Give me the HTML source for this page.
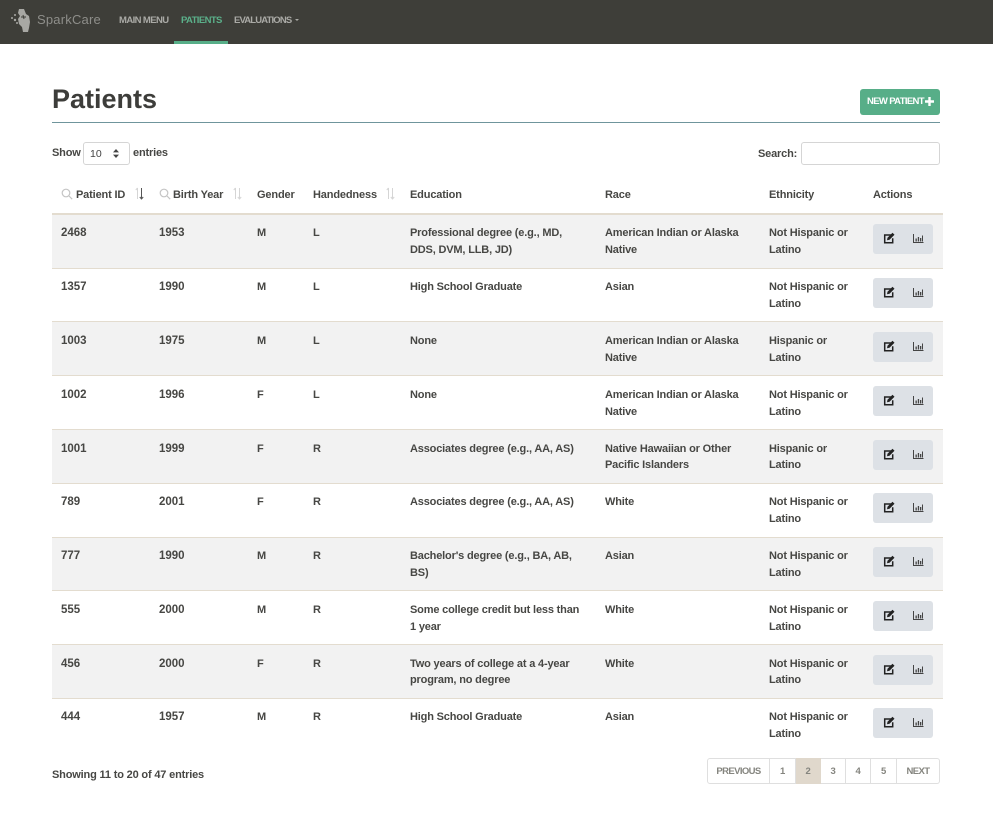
<!DOCTYPE html>
<html><head><meta charset="utf-8"><style>
html,body{margin:0;padding:0;background:#fff}
body{width:993px;height:825px;position:relative;overflow:hidden;font-family:"Liberation Sans",sans-serif;color:#3d3d3a;-webkit-font-smoothing:antialiased}
.a{position:absolute;white-space:nowrap}
.t{position:absolute;font-size:11px;letter-spacing:-.17px;font-weight:700;line-height:17px;white-space:nowrap;color:#474744;margin-top:1px}
.t[style$="top:440px"],.t[style$="top:655px"]{line-height:16px;margin-top:1px}
.t[style^="left:61px"],.t[style^="left:159px"]{font-size:11.5px;letter-spacing:0}
.h{position:absolute;font-size:11px;letter-spacing:-.15px;font-weight:700;line-height:17px;top:187px;white-space:nowrap;color:#474744}
.r{position:absolute;left:52px;width:891px;height:54px;box-sizing:border-box;border-bottom:1px solid #e3dccf}
.g{background:#f2f2f2}
.b{position:absolute;left:873px;width:60px;height:30px;background:#dde1e6;border-radius:3px}
.b svg{position:absolute;left:0;top:0}
.p{position:absolute;top:758px;height:26px;box-sizing:border-box;border:1px solid #dfdfdf;border-left:0;font-size:9.5px;letter-spacing:-.25px;font-weight:700;line-height:25px;text-align:center;color:#85857f;background:#fff}
.n{position:absolute;font-size:9.5px;line-height:13px;font-weight:700;letter-spacing:-.6px;top:14px;white-space:nowrap;color:#aaaaa6}
</style></head><body>
<div class="a" style="left:0;top:0;width:993px;height:44px;background:#3e3e39"></div>
<svg class="a" style="left:10px;top:7px" width="24" height="26" viewBox="0 0 24 26"><path d="M9 2l5 0 2 5 3 2 1 6-1 6-1 4-5 0-1-5-3-3-1-5 2-3-2-3z" fill="#a8a8a4"/><path d="M13 8l1 4M11 10h5" stroke="#3e3e39" stroke-width="1"/><circle cx="2" cy="11" r="1" fill="#a8a8a4"/><circle cx="5" cy="8" r="1" fill="#a8a8a4"/><circle cx="5" cy="13" r="1.200" fill="#a8a8a4"/><circle cx="7" cy="16" r="1" fill="#a8a8a4"/></svg>
<div class="a" style="left:37px;top:10px;font-size:13px;line-height:20px;color:#8e8e8a;letter-spacing:.2px">SparkCare</div>
<div class="n" style="left:119px">MAIN MENU</div>
<div class="n" style="left:181px;color:#5bb08a">PATIENTS</div>
<div class="n" style="left:234px;letter-spacing:-.85px">EVALUATIONS</div>
<div class="a" style="left:295px;top:19px;width:0;height:0;border:2.500px solid transparent;border-bottom:0;border-top:2.500px solid #aaaaa6"></div>
<div class="a" style="left:174px;top:41px;width:54px;height:3px;background:#57ae88"></div>

<div class="a" style="left:52px;top:81px;font-size:27px;line-height:36px;font-weight:700;color:#3d3d3a">Patients</div>
<div class="a" style="left:860px;top:89px;width:80px;height:26px;background:#57ae88;border-radius:3px"></div>
<div class="a" style="left:867px;top:95px;font-size:9.500px;line-height:13px;font-weight:700;color:#fff;letter-spacing:-.65px">NEW PATIENT</div>
<svg class="a" style="left:925px;top:97px" width="9" height="9"><path d="M3.300 0h2.400v3.300H9v2.400H5.700V9H3.300V5.700H0V3.300h3.300z" fill="#fff"/></svg>
<div class="a" style="left:52px;top:122px;width:888px;height:1px;background:#6f959c"></div>

<div class="t" style="left:52px;top:144px">Show</div>
<div class="a" style="left:83px;top:142px;width:47px;height:23px;box-sizing:border-box;border:1px solid #d5d5d5;border-radius:3px;background:#fff"></div>
<div class="a" style="left:90px;top:147px;font-size:10.500px;line-height:14px;color:#444">10</div>
<svg class="a" style="left:113px;top:149px" width="6" height="9"><path d="M3 0l3 3.400H0zM3 9L0 5.600h6z" fill="#444"/></svg>
<div class="t" style="left:133px;top:144px">entries</div>
<div class="t" style="left:758px;top:145px">Search:</div>
<div class="a" style="left:801px;top:142px;width:139px;height:23px;box-sizing:border-box;border:1px solid #d5d5d5;border-radius:3px;background:#fff"></div>

<svg class="a" style="left:61px;top:188px" width="12" height="12" fill="none" stroke="#c4c4c4" stroke-width="1.200"><circle cx="5" cy="5" r="3.800"/><path d="M8 8l3.200 3.200"/></svg>
<div class="h" style="left:76px">Patient ID</div>
<svg class="a" style="left:135px;top:187px" width="12" height="13" fill="none" stroke-width="1"><path d="M2.500 12V1M.8 3l1.700-2" stroke="#d5d5d5"/><path d="M6.500 1v11M4.800 10l1.700 2 1.700-2" stroke="#555"/></svg>
<svg class="a" style="left:159px;top:188px" width="12" height="12" fill="none" stroke="#c4c4c4" stroke-width="1.200"><circle cx="5" cy="5" r="3.800"/><path d="M8 8l3.200 3.200"/></svg>
<div class="h" style="left:173px">Birth Year</div>
<svg class="a" style="left:233px;top:187px" width="12" height="13" fill="none" stroke="#d5d5d5"><path d="M2.500 12V1M.8 3l1.700-2M6.500 1v11M4.800 10l1.700 2 1.700-2"/></svg>
<div class="h" style="left:257px">Gender</div>
<div class="h" style="left:313px">Handedness</div>
<svg class="a" style="left:386px;top:187px" width="12" height="13" fill="none" stroke="#d5d5d5"><path d="M2.500 12V1M.8 3l1.700-2M6.500 1v11M4.800 10l1.700 2 1.700-2"/></svg>
<div class="h" style="left:410px">Education</div>
<div class="h" style="left:605px">Race</div>
<div class="h" style="left:769px">Ethnicity</div>
<div class="h" style="left:873px">Actions</div>
<div class="a" style="left:52px;top:213px;width:891px;height:2px;background:#e3dccf"></div>

<div class="r g" style="top:215px;height:54px"></div>
<div class="r" style="top:269px;height:53px"></div>
<div class="r g" style="top:322px"></div>
<div class="r" style="top:376px"></div>
<div class="r g" style="top:430px"></div>
<div class="r" style="top:484px"></div>
<div class="r g" style="top:538px;height:53px"></div>
<div class="r" style="top:591px"></div>
<div class="r g" style="top:645px"></div>

<div class="t" style="left:61px;top:224px">2468</div><div class="t" style="left:159px;top:224px">1953</div><div class="t" style="left:257px;top:224px">M</div><div class="t" style="left:313px;top:224px">L</div><div class="t" style="left:410px;top:224px">Professional degree (e.g., MD,<br>DDS, DVM, LLB, JD)</div><div class="t" style="left:605px;top:224px">American Indian or Alaska<br>Native</div><div class="t" style="left:769px;top:224px">Not Hispanic or<br>Latino</div>
<div class="t" style="left:61px;top:278px">1357</div><div class="t" style="left:159px;top:278px">1990</div><div class="t" style="left:257px;top:278px">M</div><div class="t" style="left:313px;top:278px">L</div><div class="t" style="left:410px;top:278px">High School Graduate</div><div class="t" style="left:605px;top:278px">Asian</div><div class="t" style="left:769px;top:278px">Not Hispanic or<br>Latino</div>
<div class="t" style="left:61px;top:332px">1003</div><div class="t" style="left:159px;top:332px">1975</div><div class="t" style="left:257px;top:332px">M</div><div class="t" style="left:313px;top:332px">L</div><div class="t" style="left:410px;top:332px">None</div><div class="t" style="left:605px;top:332px">American Indian or Alaska<br>Native</div><div class="t" style="left:769px;top:332px">Hispanic or<br>Latino</div>
<div class="t" style="left:61px;top:386px">1002</div><div class="t" style="left:159px;top:386px">1996</div><div class="t" style="left:257px;top:386px">F</div><div class="t" style="left:313px;top:386px">L</div><div class="t" style="left:410px;top:386px">None</div><div class="t" style="left:605px;top:386px">American Indian or Alaska<br>Native</div><div class="t" style="left:769px;top:386px">Not Hispanic or<br>Latino</div>
<div class="t" style="left:61px;top:440px">1001</div><div class="t" style="left:159px;top:440px">1999</div><div class="t" style="left:257px;top:440px">F</div><div class="t" style="left:313px;top:440px">R</div><div class="t" style="left:410px;top:440px">Associates degree (e.g., AA, AS)</div><div class="t" style="left:605px;top:440px">Native Hawaiian or Other<br>Pacific Islanders</div><div class="t" style="left:769px;top:440px">Hispanic or<br>Latino</div>
<div class="t" style="left:61px;top:493px">789</div><div class="t" style="left:159px;top:493px">2001</div><div class="t" style="left:257px;top:493px">F</div><div class="t" style="left:313px;top:493px">R</div><div class="t" style="left:410px;top:493px">Associates degree (e.g., AA, AS)</div><div class="t" style="left:605px;top:493px">White</div><div class="t" style="left:769px;top:493px">Not Hispanic or<br>Latino</div>
<div class="t" style="left:61px;top:547px">777</div><div class="t" style="left:159px;top:547px">1990</div><div class="t" style="left:257px;top:547px">M</div><div class="t" style="left:313px;top:547px">R</div><div class="t" style="left:410px;top:547px">Bachelor's degree (e.g., BA, AB,<br>BS)</div><div class="t" style="left:605px;top:547px">Asian</div><div class="t" style="left:769px;top:547px">Not Hispanic or<br>Latino</div>
<div class="t" style="left:61px;top:601px">555</div><div class="t" style="left:159px;top:601px">2000</div><div class="t" style="left:257px;top:601px">M</div><div class="t" style="left:313px;top:601px">R</div><div class="t" style="left:410px;top:601px">Some college credit but less than<br>1 year</div><div class="t" style="left:605px;top:601px">White</div><div class="t" style="left:769px;top:601px">Not Hispanic or<br>Latino</div>
<div class="t" style="left:61px;top:655px">456</div><div class="t" style="left:159px;top:655px">2000</div><div class="t" style="left:257px;top:655px">F</div><div class="t" style="left:313px;top:655px">R</div><div class="t" style="left:410px;top:655px">Two years of college at a 4-year<br>program, no degree</div><div class="t" style="left:605px;top:655px">White</div><div class="t" style="left:769px;top:655px">Not Hispanic or<br>Latino</div>
<div class="t" style="left:61px;top:708px">444</div><div class="t" style="left:159px;top:708px">1957</div><div class="t" style="left:257px;top:708px">M</div><div class="t" style="left:313px;top:708px">R</div><div class="t" style="left:410px;top:708px">High School Graduate</div><div class="t" style="left:605px;top:708px">Asian</div><div class="t" style="left:769px;top:708px">Not Hispanic or<br>Latino</div>

<svg width="0" height="0" style="position:absolute"><defs><g id="ic"><path d="M18.500 11H11.700v7.800h8v-4.500" fill="none" stroke="#222" stroke-width="1.500"/><path d="M14 16.200l.5-2.500 5-5 2 2-5 5z" fill="#222"/><path d="M40.500 10v8.500h10" fill="none" stroke="#444" stroke-width="1"/><path d="M42.500 14.500h1.300v3h-1.300zM44.800 13h1.300v4.500h-1.300zM47 14h1.300v3.500H47zM49 11.500h1v6h-1z" fill="#444"/></g></defs></svg>
<div class="b" style="top:224px"><svg width="60" height="30"><use href="#ic"/></svg></div>
<div class="b" style="top:278px"><svg width="60" height="30"><use href="#ic"/></svg></div>
<div class="b" style="top:332px"><svg width="60" height="30"><use href="#ic"/></svg></div>
<div class="b" style="top:386px"><svg width="60" height="30"><use href="#ic"/></svg></div>
<div class="b" style="top:440px"><svg width="60" height="30"><use href="#ic"/></svg></div>
<div class="b" style="top:493px"><svg width="60" height="30"><use href="#ic"/></svg></div>
<div class="b" style="top:547px"><svg width="60" height="30"><use href="#ic"/></svg></div>
<div class="b" style="top:601px"><svg width="60" height="30"><use href="#ic"/></svg></div>
<div class="b" style="top:655px"><svg width="60" height="30"><use href="#ic"/></svg></div>
<div class="b" style="top:708px"><svg width="60" height="30"><use href="#ic"/></svg></div>

<div class="t" style="left:52px;top:766px">Showing 11 to 20 of 47 entries</div>
<div class="p" style="left:707px;width:63px;border-left:1px solid #dfdfdf;border-radius:3px 0 0 3px;letter-spacing:-.6px">PREVIOUS</div>
<div class="p" style="left:770px;width:26px">1</div>
<div class="p" style="left:796px;width:25px;background:#e0d8cc;border-color:#e0d8cc">2</div>
<div class="p" style="left:821px;width:25px">3</div>
<div class="p" style="left:846px;width:25px">4</div>
<div class="p" style="left:871px;width:26px">5</div>
<div class="p" style="left:897px;width:43px;border-radius:0 3px 3px 0;letter-spacing:-.6px">NEXT</div>
</body></html>
